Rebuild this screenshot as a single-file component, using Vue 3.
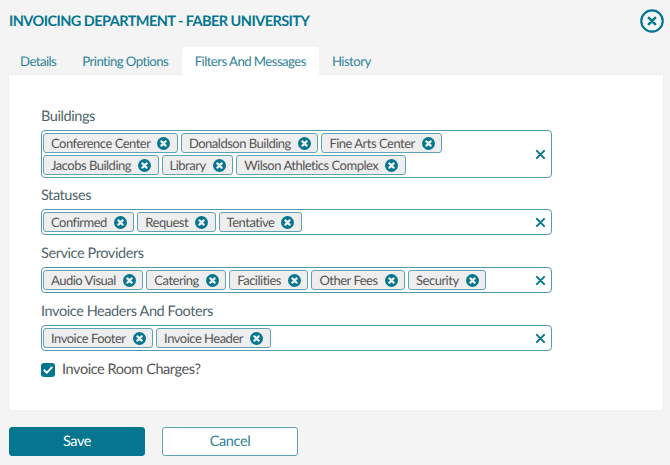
<script setup>
const groups = [
  { label: 'Buildings', items: ['Conference Center', 'Donaldson Building', 'Fine Arts Center', 'Jacobs Building', 'Library', 'Wilson Athletics Complex'] },
  { label: 'Statuses', items: ['Confirmed', 'Request', 'Tentative'] },
  { label: 'Service Providers', items: ['Audio Visual', 'Catering', 'Facilities', 'Other Fees', 'Security'] },
  { label: 'Invoice Headers And Footers', items: ['Invoice Footer', 'Invoice Header'] },
]
const tabs = ['Details', 'Printing Options', 'Filters And Messages', 'History']
</script>

<template>
  <div class="page">
    <header class="head">
      <h1 class="title">INVOICING DEPARTMENT - FABER UNIVERSITY</h1>
      <svg class="close" viewBox="0 0 26 26" width="24" height="24">
        <circle cx="13" cy="13" r="11.6" fill="none" stroke="#05768f" stroke-width="2.4" />
        <path d="M9.6 9.6l6.8 6.8M16.4 9.6l-6.8 6.8" stroke="#05768f" stroke-width="2.8" stroke-linecap="round" />
      </svg>
    </header>
    <nav class="tabs">
      <span v-for="t in tabs" :key="t" class="tab" :class="{ active: t === 'Filters And Messages' }">{{ t }}</span>
    </nav>
    <main class="panel">
      <section v-for="g in groups" :key="g.label" class="group">
        <div class="label">{{ g.label }}</div>
        <div class="box">
          <div class="chips">
            <span v-for="c in g.items" :key="c" class="chip">
              {{ c }}
              <svg class="x" viewBox="0 0 14 14" width="13" height="13">
                <circle cx="7" cy="7" r="7" fill="#05768f" />
                <path d="M4.7 4.7l4.6 4.6M9.3 4.7l-4.6 4.6" stroke="#f0f0f0" stroke-width="2.4" stroke-linecap="round" />
              </svg>
            </span>
          </div>
          <svg class="clear" viewBox="0 0 10 10" width="9" height="9">
            <path d="M1 1l8 8M9 1l-8 8" stroke="#05768f" stroke-width="2.2" stroke-linecap="round" />
          </svg>
        </div>
      </section>
      <label class="check">
        <span class="box-check">
          <svg viewBox="0 0 14 14" width="14" height="14">
            <path d="M3.2 7.2l2.6 2.6 5-5.4" fill="none" stroke="#fff" stroke-width="1.9" stroke-linecap="round" stroke-linejoin="round" />
          </svg>
        </span>
        Invoice Room Charges?
      </label>
    </main>
    <footer class="actions">
      <button class="btn save">Save</button>
      <button class="btn cancel">Cancel</button>
    </footer>
  </div>
</template>

<style>
html, body { margin: 0; background: #f4f4f4; }
</style>

<style scoped>
.page {
  width: 670px;
  height: 465px;
  box-sizing: border-box;
  padding: 8px 7px 0 9px;
  background: #f4f4f4;
  font-family: Lato, sans-serif;
  text-rendering: geometricPrecision;
  overflow: hidden;
}
.head {
  display: flex;
  justify-content: space-between;
  align-items: center;
  height: 26px;
}
.title {
  margin: 0;
  font-size: 14.5px;
  font-weight: 700;
  letter-spacing: -0.56px;
  color: #05768f;
}
.close { margin-right: -1px; }
.tabs {
  display: flex;
  margin-top: 13px;
  height: 28px;
}
.tab {
  padding: 0 13px;
  line-height: 28px;
  font-size: 13.2px;
  letter-spacing: -0.55px;
  color: #2f8398;
}
.tab:first-child { padding-left: 11px; }
.tab.active {
  background: #fff;
  border-radius: 3px 3px 0 0;
  margin-left: 0.5px;
}
.panel {
  height: 335px;
  box-sizing: border-box;
  padding: 33px 31px 0 32px;
  background: #fff;
  border-radius: 0 0 3px 3px;
  box-shadow: 0 0 2px rgba(0, 0, 0, 0.1);
}
.group { margin-bottom: 10px; width: 511px; }
.group:first-child { margin-bottom: 9px; }
.label {
  font-size: 14.5px;
  line-height: 18px;
  letter-spacing: -0.42px;
  color: #50646c;
  margin-bottom: 4px;
}
.box {
  display: flex;
  align-items: center;
  box-sizing: border-box;
  border: 1px solid #4f9bb0;
  border-radius: 4px;
  padding: 2px 6px 2px 1px;
}
.chips {
  flex: 1;
  display: flex;
  flex-wrap: wrap;
  gap: 2px 3px;
}
.chip {
  display: inline-flex;
  align-items: center;
  gap: 7px;
  height: 20px;
  box-sizing: border-box;
  padding: 0 6.5px 0 7px;
  background: #eeeeee;
  border: 1px solid #5fa3b6;
  border-radius: 3px;
  font-size: 13px;
  letter-spacing: -0.5px;
  color: #555;
  white-space: nowrap;
}
.check {
  display: flex;
  align-items: center;
  gap: 7px;
  font-size: 14.5px;
  letter-spacing: -0.43px;
  color: #555;
  margin-top: 10px;
}
.box-check {
  display: inline-flex;
  width: 14px;
  height: 14px;
  background: #05768f;
  border-radius: 3px;
}
.actions {
  display: flex;
  gap: 17px;
  margin-top: 17px;
}
.btn {
  width: 136px;
  height: 29px;
  border-radius: 3px;
  font-family: Lato, sans-serif;
  text-rendering: geometricPrecision;
  font-size: 14.5px;
  letter-spacing: -0.4px;
  padding: 0;
}
.save {
  background: #05768f;
  border: 1px solid #05768f;
  color: #fff;
}
.cancel {
  background: #fff;
  border: 1px solid #5fa3b6;
  color: #2f8398;
}
</style>
